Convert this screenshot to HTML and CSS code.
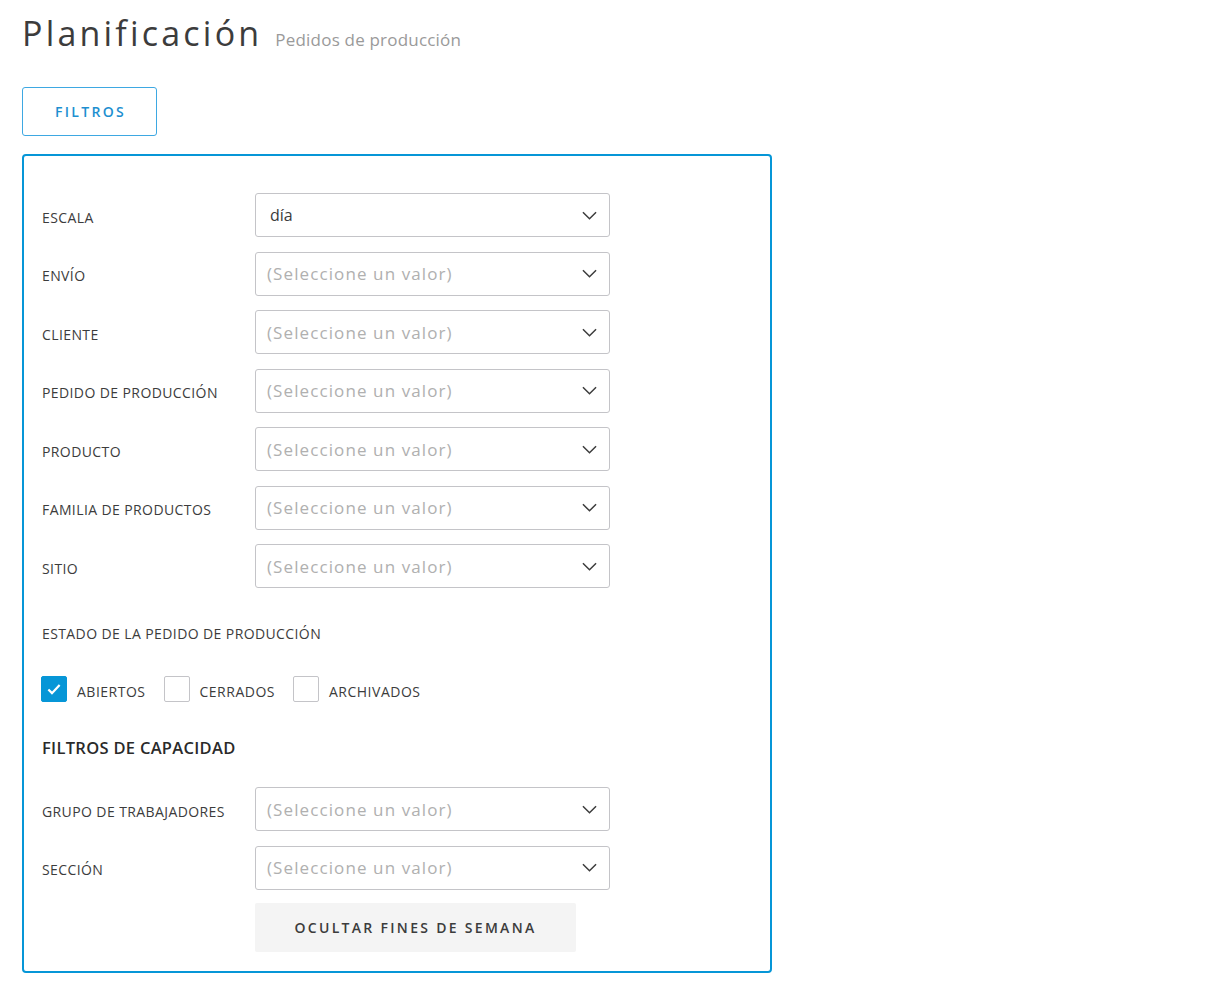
FILE: index.html
```html
<!DOCTYPE html>
<html lang="es">
<head>
<meta charset="utf-8">
<title>Planificación</title>
<link rel="stylesheet" href="styles.css">
</head>
<body>
<header class="page-head">
  <h1 class="title">Planificación</h1>
  <span class="subtitle">Pedidos de producción</span>
</header>

<button class="btn-filters" type="button">FILTROS</button>

<section class="panel">
  <div class="rows">
    <div class="row"><span class="label">ESCALA</span><div class="select"><span class="value">día</span><svg class="chev" viewBox="0 0 16 9"><path d="M1 1l7 7 7-7"/></svg></div></div>
    <div class="row"><span class="label">ENVÍO</span><div class="select"><span class="ph">(Seleccione un valor)</span><svg class="chev" viewBox="0 0 16 9"><path d="M1 1l7 7 7-7"/></svg></div></div>
    <div class="row"><span class="label">CLIENTE</span><div class="select"><span class="ph">(Seleccione un valor)</span><svg class="chev" viewBox="0 0 16 9"><path d="M1 1l7 7 7-7"/></svg></div></div>
    <div class="row"><span class="label">PEDIDO DE PRODUCCIÓN</span><div class="select"><span class="ph">(Seleccione un valor)</span><svg class="chev" viewBox="0 0 16 9"><path d="M1 1l7 7 7-7"/></svg></div></div>
    <div class="row"><span class="label">PRODUCTO</span><div class="select"><span class="ph">(Seleccione un valor)</span><svg class="chev" viewBox="0 0 16 9"><path d="M1 1l7 7 7-7"/></svg></div></div>
    <div class="row"><span class="label">FAMILIA DE PRODUCTOS</span><div class="select"><span class="ph">(Seleccione un valor)</span><svg class="chev" viewBox="0 0 16 9"><path d="M1 1l7 7 7-7"/></svg></div></div>
    <div class="row"><span class="label">SITIO</span><div class="select"><span class="ph">(Seleccione un valor)</span><svg class="chev" viewBox="0 0 16 9"><path d="M1 1l7 7 7-7"/></svg></div></div>
  </div>

  <div class="status-title">ESTADO DE LA PEDIDO DE PRODUCCIÓN</div>
  <div class="checks">
    <label class="check"><span class="box checked"><svg viewBox="0 0 16 16"><path d="M3 8.5l3.2 3.2L13 4.5"/></svg></span><span class="check-label">ABIERTOS</span></label>
    <label class="check"><span class="box"></span><span class="check-label">CERRADOS</span></label>
    <label class="check"><span class="box"></span><span class="check-label">ARCHIVADOS</span></label>
  </div>

  <h2 class="section-title">FILTROS DE CAPACIDAD</h2>
  <div class="rows rows-cap">
    <div class="row"><span class="label">GRUPO DE TRABAJADORES</span><div class="select"><span class="ph">(Seleccione un valor)</span><svg class="chev" viewBox="0 0 16 9"><path d="M1 1l7 7 7-7"/></svg></div></div>
    <div class="row"><span class="label">SECCIÓN</span><div class="select"><span class="ph">(Seleccione un valor)</span><svg class="chev" viewBox="0 0 16 9"><path d="M1 1l7 7 7-7"/></svg></div></div>
  </div>
  <div class="actions">
    <button class="btn-gray" type="button">OCULTAR FINES DE SEMANA</button>
  </div>
</section>
</body>
</html>
```

FILE: styles.css
```css
* { box-sizing: border-box; }
html, body { margin: 0; padding: 0; background: #fff; }
body {
  font-family: "Open Sans", "Noto Sans", "Liberation Sans", sans-serif;
  color: #3c3c3c;
  padding: 0 22px;
}
.page-head {
  display: flex;
  align-items: baseline;
  gap: 13px;
  padding-top: 10px;
  height: 87px;
}
.title {
  margin: 0;
  font-size: 34px;
  font-weight: 400;
  letter-spacing: 3.2px;
  color: #3c3c3c;
  line-height: 46px;
}
.subtitle {
  font-size: 17px;
  color: #9a9a9a;
  letter-spacing: 0.2px;
}
.btn-filters {
  display: block;
  width: 135px;
  height: 49px;
  border: 1.5px solid #3ea8e2;
  border-radius: 3px;
  background: #fff;
  color: #1d8fd0;
  font-family: inherit;
  font-size: 14px;
  font-weight: 600;
  letter-spacing: 2.3px;
  padding: 0 0 0 2px;
}
.panel {
  margin-top: 18px;
  width: 750px;
  border: 2px solid #0696d7;
  border-radius: 4px;
  padding: 37px 18px 19px 18px;
}
.rows {
  display: flex;
  flex-direction: column;
  gap: 14.5px;
}
.row {
  display: flex;
  align-items: center;
  height: 44px;
}
.label {
  width: 213px;
  font-size: 14px;
  color: #3c3c3c;
  padding-top: 4px;
  letter-spacing: 0.4px;
}
.select {
  width: 355px;
  height: 44px;
  border: 1px solid #c4c4c8;
  border-radius: 3px;
  display: flex;
  align-items: center;
  justify-content: space-between;
  padding: 0 12px 0 11px;
}
.value {
  font-size: 16px;
  color: #3c3c3c;
  padding-left: 3px;
}
.ph {
  font-size: 17px;
  color: #b0b0b0;
  letter-spacing: 1.1px;
}
.chev {
  width: 15px;
  height: 9px;
  fill: none;
  stroke: #3c3c3c;
  stroke-width: 1.6;
}
.status-title {
  margin-top: 36px;
  font-size: 14px;
  color: #3c3c3c;
  letter-spacing: 0.4px;
}
.checks {
  display: flex;
  gap: 18px;
  margin-top: 33px;
  margin-left: -1px;
}
.check {
  display: flex;
  align-items: center;
  gap: 10px;
}
.box {
  width: 26px;
  height: 26px;
  border: 1px solid #c4c4c8;
  border-radius: 2px;
  display: flex;
  align-items: center;
  justify-content: center;
}
.box.checked {
  background: #0696d7;
  border-color: #0696d7;
}
.box svg {
  width: 18px;
  height: 18px;
  fill: none;
  stroke: #fff;
  stroke-width: 2;
}
.check-label {
  font-size: 14px;
  color: #3c3c3c;
  padding-top: 5px;
  letter-spacing: 0.5px;
}
.section-title {
  margin: 34px 0 28px 0;
  font-size: 16.5px;
  font-weight: 600;
  color: #2a2a2a;
  letter-spacing: 0.3px;
}
.actions {
  padding-left: 213px;
  margin-top: 13px;
}
.btn-gray {
  width: 321px;
  height: 49px;
  background: #f4f4f4;
  border: none;
  border-radius: 2px;
  font-family: inherit;
  font-size: 14px;
  font-weight: 600;
  letter-spacing: 2.3px;
  color: #3c3c3c;
}
```
